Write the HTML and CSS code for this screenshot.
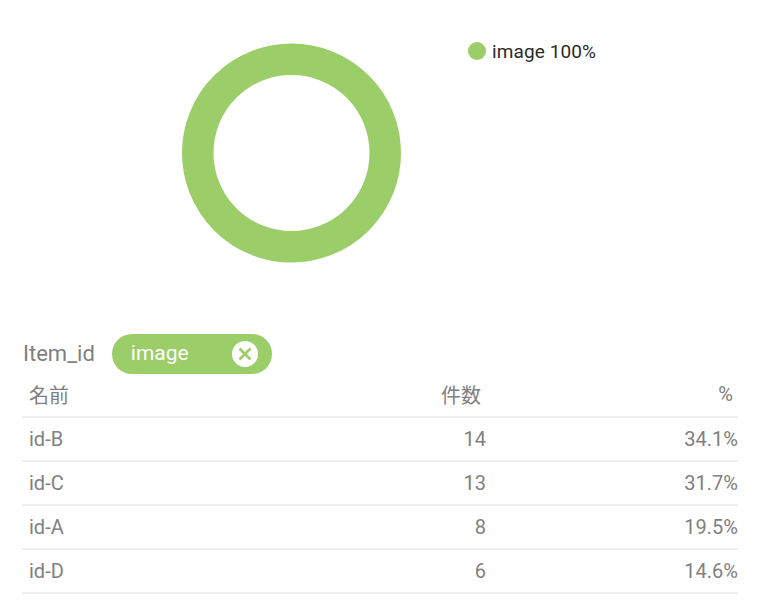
FILE: index.html
```html
<!DOCTYPE html>
<html lang="ja">
<head>
<meta charset="utf-8">
<title>Item</title>
<link rel="stylesheet" href="styles.css">
</head>
<body>
<section class="chart">
  <div class="donut-wrap">
    <svg class="donut" width="221" height="220" viewBox="0 0 221 220"><circle cx="110.5" cy="110" r="93.75" fill="none" stroke="#9bce68" stroke-width="31.5"/></svg>
  </div>
  <div class="legend"><span class="legend-dot"></span><span>image 100%</span></div>
</section>
<div class="filter">
  <span class="filter-label">Item_id</span>
  <span class="chip">
    <span class="chip-text">image</span>
    <svg class="chip-x" width="26" height="26" viewBox="0 0 26 26"><circle cx="13" cy="13" r="13" fill="#fff"/><path d="M7.5 7.5l11 11M18.5 7.5l-11 11" stroke="#9bce68" stroke-width="2.6" fill="none"/></svg>
  </span>
</div>
<table class="data">
  <thead><tr><th class="name">名前</th><th class="count">件数</th><th class="pct">%</th></tr></thead>
  <tbody>
    <tr><td class="name">id-B</td><td class="count">14</td><td class="pct">34.1%</td></tr>
    <tr><td class="name">id-C</td><td class="count">13</td><td class="pct">31.7%</td></tr>
    <tr><td class="name">id-A</td><td class="count">8</td><td class="pct">19.5%</td></tr>
    <tr><td class="name">id-D</td><td class="count">6</td><td class="pct">14.6%</td></tr>
  </tbody>
</table>
</body>
</html>
```
FILE: styles.css
```css
* { box-sizing: border-box; }
html, body { margin: 0; padding: 0; background: #fff; }
body {
  width: 764px;
  height: 612px;
  overflow: hidden;
  font-family: Roboto, "Noto Sans CJK JP", sans-serif;
  color: #808080;
  padding: 0 26px 0 22px;
}
.chart {
  display: flex;
  align-items: flex-start;
  height: 334px;
  padding-top: 43px;
}
.donut-wrap { padding-left: 159px; }
.donut { display: block; }
.legend {
  display: flex;
  align-items: center;
  gap: 6px;
  margin: -1px 0 0 66px;
  height: 18px;
  font-size: 19px;
  letter-spacing: 0.1px;
  color: #2a2a2a;
}
.legend-dot {
  width: 18px;
  height: 18px;
  border-radius: 50%;
  background: #9bce68;
}
.filter {
  display: flex;
  align-items: center;
  gap: 17px;
  height: 40px;
  padding-left: 1px;
}
.filter-label { font-size: 22px; padding-bottom: 2px; }
.chip {
  display: flex;
  align-items: center;
  justify-content: space-between;
  width: 160px;
  height: 40px;
  padding: 0 14px 0 19px;
  border-radius: 20px;
  background: #9bce68;
  color: #fff;
  font-size: 21px;
}
.chip-text { padding-bottom: 2px; }
.chip-x { display: block; }
.data {
  width: 716px;
  border-collapse: collapse;
  table-layout: fixed;
  font-size: 20px;
}
.data th, .data td {
  padding: 0;
  font-weight: 400;
  border-bottom: 2px solid #eeeeee;
  height: 44px;
}
.data th { height: 43px; padding-bottom: 2px; }
.name { text-align: left; padding-left: 7px !important; width: 230px; }
.count { text-align: right; width: 234px; }
.pct { text-align: right; }
.data th.count, .data th.pct { padding-right: 5px; }
```
